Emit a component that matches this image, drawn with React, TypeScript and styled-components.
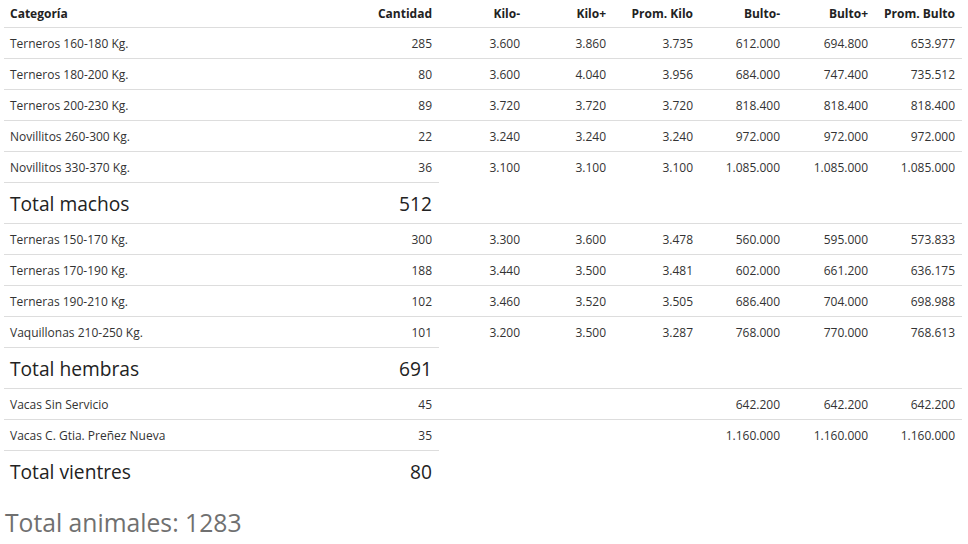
import React from "react";
import styled, { createGlobalStyle } from "styled-components";

const Global = createGlobalStyle`
  html, body { margin: 0; padding: 0; background: #fff; }
  body { font-family: "Open Sans", "Liberation Sans", sans-serif; color: #333; }
`;

const Page = styled.div`
  padding: 0 6px 0 4px;
`;

const Table = styled.table`
  width: 958px;
  border-collapse: collapse;
  table-layout: fixed;
  font-size: 12px;
`;

const HeadCell = styled.th<{ $left?: boolean }>`
  height: 27px;
  padding: 0 7px 0 6px;
  font-weight: 700;
  font-size: 12px;
  color: #222;
  text-align: ${(p) => (p.$left ? "left" : "right")};
  border-bottom: 1px solid #ddd;
  vertical-align: middle;
`;

const Cell = styled.td<{ $left?: boolean }>`
  height: 30px;
  padding: 0 7px 0 6px;
  border-top: 1px solid #ddd;
  text-align: ${(p) => (p.$left ? "left" : "right")};
  vertical-align: middle;
  white-space: nowrap;
`;

const TotalCell = styled.td<{ $left?: boolean }>`
  height: 40px;
  padding: 0 7px 0 6px;
  border-top: 1px solid #ddd;
  font-size: 19.2px;
  color: #222;
  text-align: ${(p) => (p.$left ? "left" : "right")};
  vertical-align: middle;
`;

const GrandTotal = styled.div`
  font-size: 24.7px;
  color: #707070;
  margin-top: 15px;
  line-height: 34px;
  padding-left: 1px;
`;

type Row = [string, number, string, string, string, string, string, string];

const machos: Row[] = [
  ["Terneros 160-180 Kg.", 285, "3.600", "3.860", "3.735", "612.000", "694.800", "653.977"],
  ["Terneros 180-200 Kg.", 80, "3.600", "4.040", "3.956", "684.000", "747.400", "735.512"],
  ["Terneros 200-230 Kg.", 89, "3.720", "3.720", "3.720", "818.400", "818.400", "818.400"],
  ["Novillitos 260-300 Kg.", 22, "3.240", "3.240", "3.240", "972.000", "972.000", "972.000"],
  ["Novillitos 330-370 Kg.", 36, "3.100", "3.100", "3.100", "1.085.000", "1.085.000", "1.085.000"],
];
const hembras: Row[] = [
  ["Terneras 150-170 Kg.", 300, "3.300", "3.600", "3.478", "560.000", "595.000", "573.833"],
  ["Terneras 170-190 Kg.", 188, "3.440", "3.500", "3.481", "602.000", "661.200", "636.175"],
  ["Terneras 190-210 Kg.", 102, "3.460", "3.520", "3.505", "686.400", "704.000", "698.988"],
  ["Vaquillonas 210-250 Kg.", 101, "3.200", "3.500", "3.287", "768.000", "770.000", "768.613"],
];
const vientres: Row[] = [
  ["Vacas Sin Servicio", 45, "", "", "", "642.200", "642.200", "642.200"],
  ["Vacas C. Gtia. Preñez Nueva", 35, "", "", "", "1.160.000", "1.160.000", "1.160.000"],
];

const widths = [350, 85, 88, 86, 87, 87, 88, 87];
const headers = ["Categoría", "Cantidad", "Kilo-", "Kilo+", "Prom. Kilo", "Bulto-", "Bulto+", "Prom. Bulto"];

function DataRows({ rows }: { rows: Row[] }) {
  return (
    <>
      {rows.map((r) => (
        <tr key={r[0]}>
          {r.map((v, i) => (
            <Cell key={i} $left={i === 0}>
              {v}
            </Cell>
          ))}
        </tr>
      ))}
    </>
  );
}

function TotalRow({ label, value }: { label: string; value: number }) {
  return (
    <tr>
      <TotalCell $left>{label}</TotalCell>
      <TotalCell>{value}</TotalCell>
    </tr>
  );
}

export default function App() {
  return (
    <Page>
      <Global />
      <Table>
        <colgroup>
          {widths.map((w, i) => (
            <col key={i} style={{ width: w }} />
          ))}
        </colgroup>
        <thead>
          <tr>
            {headers.map((h, i) => (
              <HeadCell key={h} $left={i === 0}>
                {h}
              </HeadCell>
            ))}
          </tr>
        </thead>
        <tbody>
          <DataRows rows={machos} />
          <TotalRow label="Total machos" value={512} />
          <DataRows rows={hembras} />
          <TotalRow label="Total hembras" value={691} />
          <DataRows rows={vientres} />
          <TotalRow label="Total vientres" value={80} />
        </tbody>
      </Table>
      <GrandTotal>Total animales: 1283</GrandTotal>
    </Page>
  );
}
